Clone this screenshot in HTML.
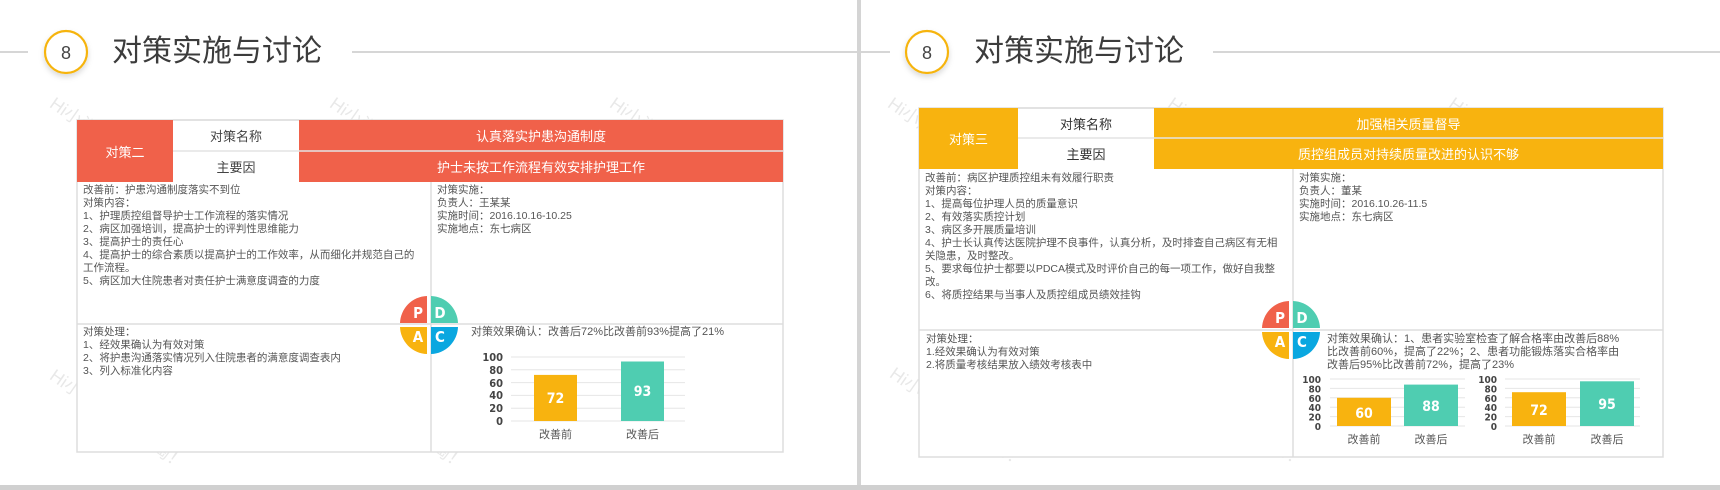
<!DOCTYPE html>
<html><head><meta charset="utf-8">
<style>
*{margin:0;padding:0;box-sizing:border-box}
body{width:1720px;height:490px;background:#fff;position:relative;overflow:hidden;font-family:"Liberation Sans","Noto Sans CJK SC",sans-serif;color:#555}
.a{position:absolute;white-space:nowrap}
.h{position:absolute;display:flex;align-items:center;justify-content:center;overflow:hidden;font-size:13px;white-space:nowrap}
.t{position:absolute;font-size:30px;color:#3c3c3c;white-space:nowrap;line-height:40px;letter-spacing:0px}
.s{position:absolute;font-size:10.5px;line-height:13px;white-space:nowrap;color:#555}
.wm{position:absolute;font-size:18px;color:rgba(0,0,0,.09);transform:rotate(35deg);transform-origin:0 0;white-space:nowrap}
</style></head><body>

<div class="wm" style="left:60px;top:90px">Hi小淘，淘你想淘！</div>
<div class="wm" style="left:340px;top:90px">Hi小淘，淘你想淘！</div>
<div class="wm" style="left:620px;top:90px">Hi小淘，淘你想淘！</div>
<div class="wm" style="left:60px;top:362px">Hi小淘，淘你想淘！</div>
<div class="wm" style="left:340px;top:362px">Hi小淘，淘你想淘！</div>
<div class="wm" style="left:898px;top:90px">Hi小淘，淘你想淘！</div>
<div class="wm" style="left:1178px;top:90px">Hi小淘，淘你想淘！</div>
<div class="wm" style="left:1459px;top:90px">Hi小淘，淘你想淘！</div>
<div class="wm" style="left:900px;top:360px">Hi小淘，淘你想淘！</div>
<div class="wm" style="left:1180px;top:360px">Hi小淘，淘你想淘！</div>

<svg class="a" style="left:0;top:0" width="1720" height="490">
<defs><filter id="sh" x="-50%" y="-50%" width="200%" height="200%"><feDropShadow dx="0" dy="3" stdDeviation="3" flood-color="#000" flood-opacity=".15"/></filter></defs>
<rect x="857" y="0" width="4" height="490" fill="#d4d4d4"/>
<rect x="0" y="485" width="1720" height="5" fill="#d0d0d0"/>
<line x1="0" y1="52" x2="28" y2="52" stroke="#d6d6d6" stroke-width="2"/>
<line x1="352" y1="52" x2="857" y2="52" stroke="#d6d6d6" stroke-width="2"/>
<line x1="861" y1="52" x2="890" y2="52" stroke="#d6d6d6" stroke-width="2"/>
<line x1="1213" y1="52" x2="1720" y2="52" stroke="#d6d6d6" stroke-width="2"/>
<circle cx="66" cy="52" r="21" fill="#fff" stroke="#f6b40f" stroke-width="2.2" filter="url(#sh)"/>
<circle cx="927" cy="52" r="21" fill="#fff" stroke="#f6b40f" stroke-width="2.2" filter="url(#sh)"/>
<text x="66" y="59" font-size="18" text-anchor="middle" fill="#444" font-family="Liberation Sans">8</text>
<text x="927" y="59" font-size="18" text-anchor="middle" fill="#444" font-family="Liberation Sans">8</text>

<rect x="77" y="120" width="706" height="332" fill="#fff" stroke="#ddd" stroke-width="1.5"/>
<rect x="77" y="120" width="96" height="62" fill="#f0614a"/>
<rect x="299" y="120" width="484" height="62" fill="#f0614a"/>
<line x1="173" y1="151" x2="783" y2="151" stroke="#e4e4e4" stroke-width="1.5"/>
<line x1="173" y1="120" x2="299" y2="120" stroke="#ddd" stroke-width="1.5"/>
<line x1="431" y1="182" x2="431" y2="452" stroke="#ddd" stroke-width="1.5"/>
<line x1="77" y1="324" x2="783" y2="324" stroke="#ddd" stroke-width="1.5"/>

<rect x="919" y="108" width="744" height="349" fill="#fff" stroke="#ddd" stroke-width="1.5"/>
<rect x="919" y="108" width="99" height="61" fill="#f8b30f"/>
<rect x="1154" y="108" width="509" height="61" fill="#f8b30f"/>
<line x1="1018" y1="138" x2="1663" y2="138" stroke="#e4e4e4" stroke-width="1.5"/>
<line x1="1018" y1="108" x2="1154" y2="108" stroke="#ddd" stroke-width="1.5"/>
<line x1="1293" y1="169" x2="1293" y2="457" stroke="#ddd" stroke-width="1.5"/>
<line x1="919" y1="330" x2="1663" y2="330" stroke="#ddd" stroke-width="1.5"/>

<g transform="translate(429,325)">
<path d="M-1,-1 L-1,-28 A28,28 0 0 0 -28,-1 Z" fill="#f0614a" transform="translate(-1,-1)"/>
<path d="M1,-1 L1,-28 A28,28 0 0 1 28,-1 Z" fill="#4fcdb1" transform="translate(1,-1)"/>
<path d="M-1,1 L-1,28 A28,28 0 0 1 -28,1 Z" fill="#f8b30f" transform="translate(-1,1)"/>
<path d="M1,1 L1,28 A28,28 0 0 0 28,1 Z" fill="#0aa7e0" transform="translate(1,1)"/>
<g font-family="DejaVu Sans Condensed" font-weight="bold" font-size="15" fill="#fff" text-anchor="middle">
<text x="-11" y="-7">P</text><text x="11" y="-7">D</text><text x="-11" y="17">A</text><text x="11" y="17">C</text></g>
</g>
<g transform="translate(1291,330)">
<path d="M-1,-1 L-1,-28 A28,28 0 0 0 -28,-1 Z" fill="#f0614a" transform="translate(-1,-1)"/>
<path d="M1,-1 L1,-28 A28,28 0 0 1 28,-1 Z" fill="#4fcdb1" transform="translate(1,-1)"/>
<path d="M-1,1 L-1,28 A28,28 0 0 1 -28,1 Z" fill="#f8b30f" transform="translate(-1,1)"/>
<path d="M1,1 L1,28 A28,28 0 0 0 28,1 Z" fill="#0aa7e0" transform="translate(1,1)"/>
<g font-family="DejaVu Sans Condensed" font-weight="bold" font-size="15" fill="#fff" text-anchor="middle">
<text x="-11" y="-7">P</text><text x="11" y="-7">D</text><text x="-11" y="17">A</text><text x="11" y="17">C</text></g>
</g>

<g stroke="#e6e6e6" stroke-width="1">
<line x1="511" y1="421" x2="685" y2="421"/><line x1="511" y1="408.2" x2="685" y2="408.2"/><line x1="511" y1="395.4" x2="685" y2="395.4"/><line x1="511" y1="382.6" x2="685" y2="382.6"/><line x1="511" y1="369.8" x2="685" y2="369.8"/><line x1="511" y1="357" x2="685" y2="357"/>
</g>
<g font-family="DejaVu Sans Condensed" font-weight="bold" font-size="11" fill="#444" text-anchor="end">
<text x="503" y="425">0</text><text x="503" y="412">20</text><text x="503" y="399">40</text><text x="503" y="387">60</text><text x="503" y="374">80</text><text x="503" y="361">100</text></g>
<rect x="534" y="374.9" width="43" height="46.1" fill="#f8b30f"/>
<rect x="621" y="361.5" width="43" height="59.5" fill="#4fcdb1"/>
<g font-family="DejaVu Sans Condensed" font-weight="bold" font-size="14" fill="#fff" text-anchor="middle">
<text x="555.5" y="403">72</text><text x="642.5" y="396">93</text></g>
<g font-family="Liberation Sans,Noto Sans CJK SC,sans-serif" font-size="11" fill="#555" text-anchor="middle">
<text x="555.5" y="438">改善前</text><text x="642.5" y="438">改善后</text></g>

<g stroke="#e6e6e6" stroke-width="1">
<line x1="1330" y1="426" x2="1465" y2="426"/><line x1="1330" y1="416.6" x2="1465" y2="416.6"/><line x1="1330" y1="407.2" x2="1465" y2="407.2"/><line x1="1330" y1="397.8" x2="1465" y2="397.8"/><line x1="1330" y1="388.4" x2="1465" y2="388.4"/><line x1="1330" y1="379" x2="1465" y2="379"/>
<line x1="1505" y1="426" x2="1640" y2="426"/><line x1="1505" y1="416.6" x2="1640" y2="416.6"/><line x1="1505" y1="407.2" x2="1640" y2="407.2"/><line x1="1505" y1="397.8" x2="1640" y2="397.8"/><line x1="1505" y1="388.4" x2="1640" y2="388.4"/><line x1="1505" y1="379" x2="1640" y2="379"/>
</g>
<g font-family="DejaVu Sans Condensed" font-weight="bold" font-size="10" fill="#444" text-anchor="end">
<text x="1321" y="430">0</text><text x="1321" y="420.6">20</text><text x="1321" y="411.2">40</text><text x="1321" y="401.8">60</text><text x="1321" y="392.4">80</text><text x="1321" y="383">100</text>
<text x="1497" y="430">0</text><text x="1497" y="420.6">20</text><text x="1497" y="411.2">40</text><text x="1497" y="401.8">60</text><text x="1497" y="392.4">80</text><text x="1497" y="383">100</text></g>
<rect x="1337" y="397.8" width="54" height="28.2" fill="#f8b30f"/>
<rect x="1404" y="384.6" width="54" height="41.4" fill="#4fcdb1"/>
<rect x="1512" y="392.2" width="54" height="33.8" fill="#f8b30f"/>
<rect x="1580" y="381.3" width="54" height="44.7" fill="#4fcdb1"/>
<g font-family="DejaVu Sans Condensed" font-weight="bold" font-size="14" fill="#fff" text-anchor="middle">
<text x="1364" y="418">60</text><text x="1431" y="411">88</text><text x="1539" y="415">72</text><text x="1607" y="409">95</text></g>
<g font-family="Liberation Sans,Noto Sans CJK SC,sans-serif" font-size="11" fill="#555" text-anchor="middle">
<text x="1364" y="443">改善前</text><text x="1431" y="443">改善后</text><text x="1539" y="443">改善前</text><text x="1607" y="443">改善后</text></g>
</svg>

<div class="t" style="left:112px;top:32px">对策实施与讨论</div>
<div class="t" style="left:974px;top:32px">对策实施与讨论</div>

<div class="h" style="left:77px;top:120px;width:96px;height:62px;color:#fff">对策二</div>
<div class="h" style="left:173px;top:120px;width:126px;height:31px;color:#444">对策名称</div>
<div class="h" style="left:173px;top:151px;width:126px;height:31px;color:#444">主要因</div>
<div class="h" style="left:299px;top:120px;width:484px;height:31px;color:#fff">认真落实护患沟通制度</div>
<div class="h" style="left:299px;top:151px;width:484px;height:31px;color:#fff">护士未按工作流程有效安排护理工作</div>

<div class="h" style="left:919px;top:108px;width:99px;height:61px;color:#fff">对策三</div>
<div class="h" style="left:1018px;top:108px;width:136px;height:30px;color:#333">对策名称</div>
<div class="h" style="left:1018px;top:138px;width:136px;height:31px;color:#333">主要因</div>
<div class="h" style="left:1154px;top:108px;width:509px;height:30px;color:#fff">加强相关质量督导</div>
<div class="h" style="left:1154px;top:138px;width:509px;height:31px;color:#fff">质控组成员对持续质量改进的认识不够</div>

<div class="s" style="left:83px;top:184px">改善前：护患沟通制度落实不到位<br>对策内容：<br>1、护理质控组督导护士工作流程的落实情况<br>2、病区加强培训，提高护士的评判性思维能力<br>3、提高护士的责任心<br>4、提高护士的综合素质以提高护士的工作效率，从而细化并规范自己的<br>工作流程。<br>5、病区加大住院患者对责任护士满意度调查的力度</div>
<div class="s" style="left:437px;top:184px">对策实施：<br>负责人：王某某<br>实施时间：2016.10.16-10.25<br>实施地点：东七病区</div>

<div class="s" style="left:83px;top:326px">对策处理：<br>1、经效果确认为有效对策<br>2、将护患沟通落实情况列入住院患者的满意度调查表内<br>3、列入标准化内容</div>
<div class="s" style="left:471px;top:326px;font-size:11px">对策效果确认：改善后72%比改善前93%提高了21%</div>

<div class="s" style="left:925px;top:172px">改善前：病区护理质控组未有效履行职责<br>对策内容：<br>1、提高每位护理人员的质量意识<br>2、有效落实质控计划<br>3、病区多开展质量培训<br>4、护士长认真传达医院护理不良事件，认真分析，及时排查自己病区有无相<br>关隐患，及时整改。<br>5、要求每位护士都要以PDCA模式及时评价自己的每一项工作，做好自我整<br>改。<br>6、将质控结果与当事人及质控组成员绩效挂钩</div>
<div class="s" style="left:1299px;top:172px">对策实施：<br>负责人：董某<br>实施时间：2016.10.26-11.5<br>实施地点：东七病区</div>

<div class="s" style="left:926px;top:333px">对策处理：<br>1.经效果确认为有效对策<br>2.将质量考核结果放入绩效考核表中</div>
<div class="s" style="left:1327px;top:333px;font-size:11px;line-height:13px">对策效果确认：1、患者实验室检查了解合格率由改善后88%<br>比改善前60%，提高了22%；2、患者功能锻炼落实合格率由<br>改善后95%比改善前72%，提高了23%</div>

</body></html>
